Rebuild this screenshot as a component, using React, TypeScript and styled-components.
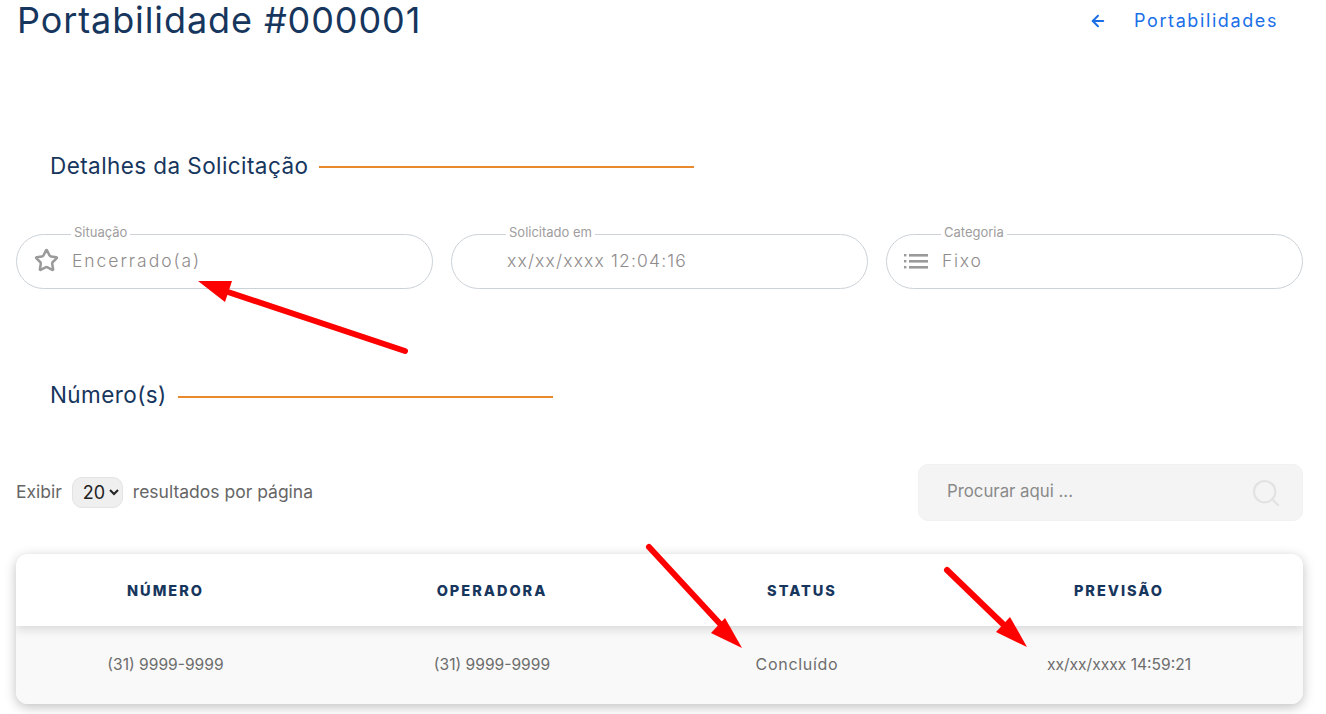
import React from 'react'
import styled, { createGlobalStyle } from 'styled-components'
import { ArrowLeft, Search, Star } from 'lucide-react'

const GlobalStyle = createGlobalStyle`
  html, body {
    margin: 0;
    padding: 0;
    height: 714px;
    overflow: hidden;
    background: #fff;
    font-family: Inter, "Open Sans", "Liberation Sans", sans-serif;
  }
  * { box-sizing: border-box; }
`

const ListIcon = () => (
  <svg width="24" height="18" viewBox="0 0 24 18" fill="currentColor">
    <rect x="0" y="2" width="2.4" height="2.4" />
    <rect x="0" y="8" width="2.4" height="2.4" />
    <rect x="0" y="14" width="2.4" height="2.4" />
    <rect x="5" y="2" width="19" height="2.6" />
    <rect x="5" y="8" width="19" height="2.6" />
    <rect x="5" y="14" width="19" height="2.6" />
  </svg>
)

const fields = [
  { label: 'Situação', value: 'Encerrado(a)', tracking: 1.95, icon: <Star size={25} strokeWidth={2.4} /> },
  { label: 'Solicitado em', value: 'xx/xx/xxxx 12:04:16', tracking: 1.15, icon: null },
  { label: 'Categoria', value: 'Fixo', tracking: 1.7, icon: <ListIcon /> },
]

const columns = [
  { title: 'NÚMERO', value: '(31) 9999-9999', width: 299, wide: false },
  { title: 'OPERADORA', value: '(31) 9999-9999', width: 354, wide: false },
  { title: 'STATUS', value: 'Concluído', width: 266, wide: true },
  { title: 'PREVISÃO', value: 'xx/xx/xxxx 14:59:21', width: 368, wide: false },
]

export default function App() {
  return (
    <S.Page>
      <GlobalStyle />
      <S.Header>
        <S.Title>Portabilidade #000001</S.Title>
        <S.BackLink href="#">
          <ArrowLeft size={18} strokeWidth={2.6} />
          Portabilidades
        </S.BackLink>
      </S.Header>

      <S.SectionTitle $top={85} $drop={4}>
        <h2>Detalhes da Solicitação</h2>
        <span />
      </S.SectionTitle>

      <S.Fields>
        {fields.map((f) => (
          <S.Field key={f.label}>
            <legend>{f.label}</legend>
            <S.FieldIcon>{f.icon}</S.FieldIcon>
            <S.FieldValue $tracking={f.tracking}>{f.value}</S.FieldValue>
          </S.Field>
        ))}
      </S.Fields>

      <S.SectionTitle $top={66} $drop={6}>
        <h2>Número(s)</h2>
        <span />
      </S.SectionTitle>

      <S.Controls>
        <S.PageSize>
          <span>Exibir</span>
          <select defaultValue="20">
            <option>10</option>
            <option>20</option>
            <option>50</option>
          </select>
          <span>resultados por página</span>
        </S.PageSize>
        <S.SearchBox>
          <input placeholder="Procurar aqui ..." />
          <Search size={32} strokeWidth={1.6} />
        </S.SearchBox>
      </S.Controls>

      <S.Table>
        <colgroup>
          {columns.map((c) => (
            <col key={c.title} width={c.width} />
          ))}
        </colgroup>
        <thead>
          <tr>
            {columns.map((c) => (
              <th key={c.title}>{c.title}</th>
            ))}
          </tr>
        </thead>
        <tbody>
          <tr>
            {columns.map((c) => (
              <S.Cell key={c.title} $wide={c.wide}>
                {c.value}
              </S.Cell>
            ))}
          </tr>
        </tbody>
      </S.Table>

      <S.Annotations viewBox="0 0 1326 714">
        <g fill="#f00" stroke="#f00">
          <line x1="405" y1="351" x2="222" y2="290" strokeWidth="6" strokeLinecap="round" />
          <polygon points="198,281 232,281 225,302" strokeWidth="0" />
          <line x1="649" y1="547" x2="722" y2="626" strokeWidth="6" strokeLinecap="round" />
          <polygon points="742,648 725,618 711,633" strokeWidth="0" />
          <line x1="947" y1="570" x2="1008" y2="629" strokeWidth="6" strokeLinecap="round" />
          <polygon points="1027,647 1010,617 996,632" strokeWidth="0" />
        </g>
      </S.Annotations>
    </S.Page>
  )
}

const S = {
  Page: styled.div`
    position: relative;
    width: 1326px;
    height: 714px;
    padding: 0 23px 0 16px;
    overflow: hidden;
  `,

  Header: styled.header`
    display: flex;
    align-items: center;
    justify-content: space-between;
    height: 41px;
  `,

  Title: styled.h1`
    margin: 0 0 0 1px;
    font-size: 36px;
    line-height: 41px;
    font-weight: 400;
    color: #17365d;
    letter-spacing: 0.9px;
  `,

  BackLink: styled.a`
    display: flex;
    align-items: center;
    gap: 27px;
    margin-right: 25px;
    font-size: 18px;
    letter-spacing: 1.6px;
    color: #1a6fe8;
    text-decoration: none;
  `,

  SectionTitle: styled.div<{ $top: number; $drop: number }>`
    display: flex;
    align-items: center;
    gap: 11px;
    margin: ${(p) => p.$top}px 0 0 34px;
    height: 78px;

    h2 {
      margin: 0;
      font-size: 22.5px;
      font-weight: 400;
      letter-spacing: 0.42px;
      color: #17365d;
    }

    span {
      width: 375px;
      height: 2px;
      margin-top: ${(p) => p.$drop}px;
      background: #e8892b;
    }
  `,

  Fields: styled.div`
    display: grid;
    grid-template-columns: repeat(3, 417px);
    gap: 18px;
    margin-top: 21px;
  `,

  Field: styled.fieldset`
    display: flex;
    align-items: center;
    margin: 0;
    padding: 0 0 10px 17px;
    height: 64px;
    border: 1px solid #ccd2d8;
    border-radius: 28px;
    min-width: 0;

    legend {
      margin-left: 37px;
      padding: 0 3px 4px;
      font-size: 13px;
      line-height: 14px;
      color: #a09d9d;
    }
  `,

  FieldIcon: styled.span`
    display: flex;
    align-items: center;
    width: 38px;
    color: #9a9a9a;
  `,

  FieldValue: styled.span<{ $tracking: number }>`
    font-size: 17.5px;
    letter-spacing: ${(p) => p.$tracking}px;
    font-weight: 300;
    color: #8f8b8b;
  `,

  Controls: styled.div`
    display: flex;
    align-items: center;
    justify-content: space-between;
    margin-top: 31px;
    height: 57px;
  `,

  PageSize: styled.label`
    display: flex;
    align-items: center;
    gap: 10px;
    font-size: 17.5px;
    color: #666;

    span {
      margin-top: -3px;
    }

    select {
      width: 51px;
      height: 31px;
      padding: 0 0 0 6px;
      border: 1px solid #e3e3e3;
      border-radius: 10px;
      background: #efefef;
      font-family: inherit;
      font-size: 18px;
      color: #222;
    }
  `,

  SearchBox: styled.div`
    display: flex;
    align-items: center;
    width: 385px;
    height: 57px;
    padding: 0 20px 0 28px;
    border: 1px solid #f1f1f1;
    border-radius: 10px;
    background: #f4f4f4;
    color: #e2e2e2;

    input {
      flex: 1;
      min-width: 0;
      padding: 0 0 3px;
      border: 0;
      outline: 0;
      background: transparent;
      font-family: inherit;
      font-size: 16.8px;
      color: #777;
    }

    input::placeholder {
      color: #8a8a8a;
      opacity: 1;
    }
  `,

  Table: styled.table`
    width: 1287px;
    margin-top: 33px;
    table-layout: fixed;
    border-collapse: separate;
    border-spacing: 0;
    border-radius: 12px;
    overflow: hidden;
    box-shadow: 0 3px 12px rgba(0, 0, 0, 0.25);

    thead tr {
      height: 72px;
      position: relative;
      z-index: 1;
      background: #fff;
      box-shadow: 0 3px 10px rgba(0, 0, 0, 0.14);
    }

    th {
      padding: 0;
      font-size: 14.5px;
      font-weight: 800;
      letter-spacing: 2px;
      color: #17365d;
    }

    tbody tr {
      height: 78px;
      background: #f9f9f9;
    }
  `,

  Cell: styled.td<{ $wide: boolean }>`
    padding: ${(p) => (p.$wide ? '0 10px 2px 0' : '0 0 2px')};
    text-align: center;
    font-size: ${(p) => (p.$wide ? '16px' : '15.6px')};
    letter-spacing: ${(p) => (p.$wide ? '0.7px' : '0')};
    color: #6d6d6d;
  `,

  Annotations: styled.svg`
    position: absolute;
    left: 0;
    top: 0;
    z-index: 2;
    width: 1326px;
    height: 714px;
    pointer-events: none;
  `,
}
